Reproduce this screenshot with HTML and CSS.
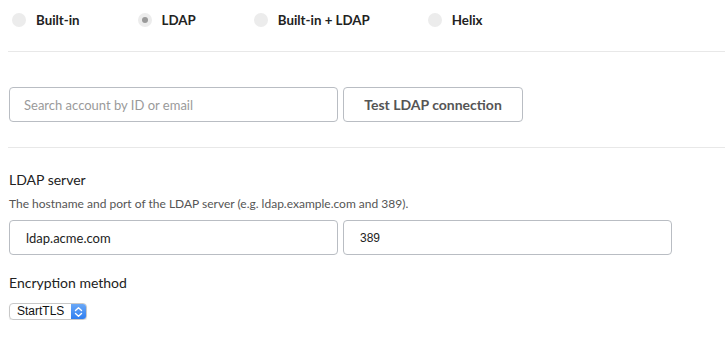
FILE: index.html
```html
<!DOCTYPE html>
<html>
<head>
<meta charset="utf-8">
<link rel="stylesheet" href="styles.css">
</head>
<body>
<div class="page">
  <div class="radios">
    <label class="radio"><span class="dot"></span><span class="rlabel">Built-in</span></label>
    <label class="radio"><span class="dot checked"></span><span class="rlabel">LDAP</span></label>
    <label class="radio"><span class="dot"></span><span class="rlabel">Built-in + LDAP</span></label>
    <label class="radio"><span class="dot"></span><span class="rlabel">Helix</span></label>
  </div>
  <hr class="divider">
  <div class="row search-row">
    <input class="field search" type="text" placeholder="Search account by ID or email">
    <button class="btn">Test LDAP connection</button>
  </div>
  <hr class="divider divider2">
  <div class="section">
    <div class="title">LDAP server</div>
    <div class="desc">The hostname and port of the LDAP server (e.g. ldap.example.com and 389).</div>
    <div class="row">
      <input class="field" type="text" value="ldap.acme.com">
      <input class="field port" type="text" value="389">
    </div>
    <div class="title title2">Encryption method</div>
    <div class="select">
      <span class="select-text">StartTLS</span>
      <span class="select-arrow">
        <svg width="9" height="12" viewBox="0 0 9 12"><path d="M1.5 4.5 L4.5 1.8 L7.5 4.5 M1.5 7.5 L4.5 10.2 L7.5 7.5" fill="none" stroke="#fff" stroke-width="1.4" stroke-linecap="round" stroke-linejoin="round"/></svg>
      </span>
    </div>
  </div>
</div>
</body>
</html>
```

FILE: styles.css
```css
html, body {
  margin: 0;
  padding: 0;
  background: #fff;
}
body {
  font-family: Lato, "Open Sans", sans-serif;
  color: #333;
}
.page {
  padding-left: 9px;
}
.radios {
  display: flex;
  align-items: center;
  gap: 58px;
  height: 40px;
  padding-left: 3px;
}
.radio {
  display: flex;
  align-items: center;
  gap: 10px;
}
.dot {
  width: 14px;
  height: 14px;
  border-radius: 50%;
  background: #ececec;
  box-sizing: border-box;
  display: flex;
  align-items: center;
  justify-content: center;
}
.dot.checked::after {
  content: "";
  width: 6px;
  height: 6px;
  border-radius: 50%;
  background: #9a9a9a;
}
.rlabel {
  font-size: 13.3px;
  font-weight: 700;
  color: #222;
}
.divider {
  border: 0;
  border-top: 1px solid #e8e8e8;
  margin: 11px 0 0 -1px;
  height: 0;
}
.row {
  display: flex;
  gap: 5px;
}
.search-row {
  margin-top: 35px;
}
.field {
  width: 329px;
  height: 35px;
  box-sizing: border-box;
  border: 1px solid #b9bdc3;
  border-radius: 4px;
  padding: 0 16px;
  font-family: Lato, sans-serif;
  font-size: 13px;
  color: #222;
  margin: 0;
  outline: none;
}
.field.search {
  font-size: 13px;
  padding: 0 14px;
}
.field::placeholder {
  color: #9a9a9a;
}
.field.port {
  font-family: "Liberation Sans", Arial, sans-serif;
  font-size: 12px;
}
.btn {
  width: 180px;
  height: 35px;
  box-sizing: border-box;
  border: 1px solid #b9bdc3;
  border-radius: 4px;
  background: #fff;
  font-family: Lato, sans-serif;
  font-size: 14px;
  font-weight: 700;
  color: #555;
  margin: 0;
  padding: 0;
}
.divider2 {
  margin-top: 25px;
}
.section {
  padding-top: 23px;
}
.title {
  font-size: 14px;
  line-height: 18px;
  color: #222;
}
.desc {
  font-size: 12px;
  line-height: 14px;
  color: #555;
  margin-top: 8px;
  margin-bottom: 9px;
}
.title2 {
  margin-top: 19px;
}
.select {
  display: inline-flex;
  margin-top: 11px;
  height: 17px;
  width: 78px;
  box-sizing: border-box;
  border: 1px solid #c8c8c8;
  border-radius: 4px;
  overflow: hidden;
  box-shadow: 0 1px 1px rgba(0,0,0,0.1);
}
.select-text {
  flex: 1;
  font-family: "Liberation Sans", Arial, sans-serif;
  font-size: 12px;
  line-height: 15px;
  color: #111;
  padding-left: 7px;
}
.select-arrow {
  width: 15px;
  background: linear-gradient(#6aa8f7, #2f7ef0);
  display: flex;
  align-items: center;
  justify-content: center;
}
```
